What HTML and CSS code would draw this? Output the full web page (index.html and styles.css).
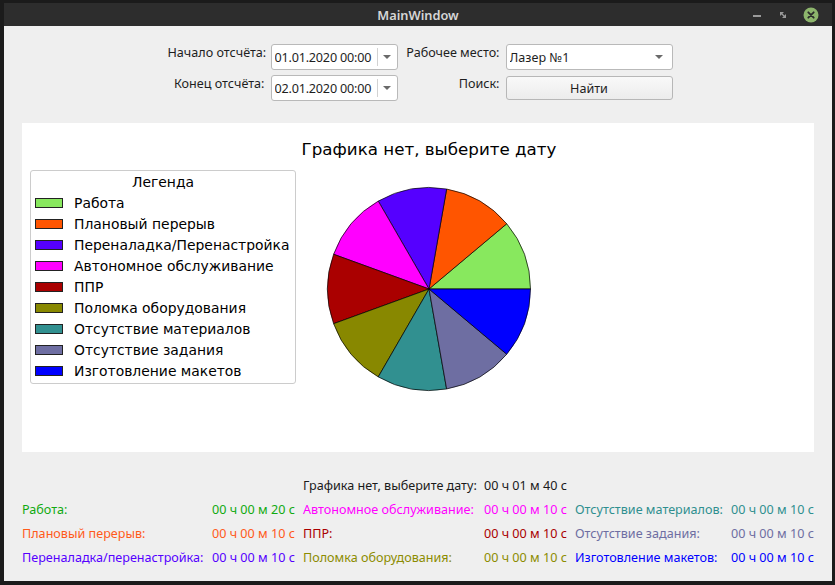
FILE: index.html
```html
<!DOCTYPE html>
<html lang="ru">
<head>
<meta charset="utf-8">
<title>MainWindow</title>
<link rel="stylesheet" href="styles.css">
</head>
<body>
<div class="window">
  <div class="titlebar">
    <span class="title">MainWindow</span>
    <div class="wm-buttons">
      <svg class="wm-min" width="12" height="12" viewBox="0 0 12 12"><rect x="2" y="6" width="8" height="2" fill="#9a9a9a"/></svg>
      <svg class="wm-max" width="12" height="12" viewBox="0 0 12 12"><path d="M3 3 L7 3 L3 7 Z M9 9 L5 9 L9 5 Z" fill="#9a9a9a"/><path d="M4 4 L8 8" stroke="#9a9a9a" stroke-width="1.2"/></svg>
      <svg class="wm-close" width="16" height="16" viewBox="0 0 16 16"><circle cx="8" cy="8" r="7.5" fill="#8db56c"/><path d="M5.3 5.3 L10.7 10.7 M10.7 5.3 L5.3 10.7" stroke="#2a2a2a" stroke-width="1.8" stroke-linecap="round"/></svg>
    </div>
  </div>
  <div class="content">
    <div class="controls">
      <label class="ctl-label">Начало отсчёта:</label>
      <div class="combo date">
        <span class="combo-text">01.01.2020 00:00</span>
        <span class="combo-sep"></span>
        <span class="combo-arrow"></span>
      </div>
      <label class="ctl-label">Рабочее место:</label>
      <div class="combo place">
        <span class="combo-text">Лазер №1</span>
        <span class="combo-arrow"></span>
      </div>
      <label class="ctl-label">Конец отсчёта:</label>
      <div class="combo date">
        <span class="combo-text">02.01.2020 00:00</span>
        <span class="combo-sep"></span>
        <span class="combo-arrow"></span>
      </div>
      <label class="ctl-label">Поиск:</label>
      <button class="btn">Найти</button>
    </div>

    <div class="chart">
      <div class="legend">
        <div class="legend-title">Легенда</div>
        <div class="legend-row"><span class="swatch c-work"></span>Работа</div>
        <div class="legend-row"><span class="swatch c-break"></span>Плановый перерыв</div>
        <div class="legend-row"><span class="swatch c-setup"></span>Переналадка/Перенастройка</div>
        <div class="legend-row"><span class="swatch c-auto"></span>Автономное обслуживание</div>
        <div class="legend-row"><span class="swatch c-ppr"></span>ППР</div>
        <div class="legend-row"><span class="swatch c-broken"></span>Поломка оборудования</div>
        <div class="legend-row"><span class="swatch c-mat"></span>Отсутствие материалов</div>
        <div class="legend-row"><span class="swatch c-task"></span>Отсутствие задания</div>
        <div class="legend-row"><span class="swatch c-mock"></span>Изготовление макетов</div>
      </div>
      <div class="plot">
        <div class="plot-title">Графика нет, выберите дату</div>
        <svg class="pie" width="206" height="206" viewBox="-103 -103 206 206">
          <g stroke="#000" stroke-width="0.7" stroke-linejoin="round">
            <path d="M0 0 L101.5 0 A101.5 101.5 0 0 0 77.75 -65.24 Z" fill="#88e85e"/>
            <path d="M0 0 L77.75 -65.24 A101.5 101.5 0 0 0 17.63 -99.96 Z" fill="#ff5500"/>
            <path d="M0 0 L17.63 -99.96 A101.5 101.5 0 0 0 -50.75 -87.90 Z" fill="#5500ff"/>
            <path d="M0 0 L-50.75 -87.90 A101.5 101.5 0 0 0 -95.38 -34.71 Z" fill="#ff00ff"/>
            <path d="M0 0 L-95.38 -34.71 A101.5 101.5 0 0 0 -95.38 34.71 Z" fill="#aa0000"/>
            <path d="M0 0 L-95.38 34.71 A101.5 101.5 0 0 0 -50.75 87.90 Z" fill="#888800"/>
            <path d="M0 0 L-50.75 87.90 A101.5 101.5 0 0 0 17.63 99.96 Z" fill="#319090"/>
            <path d="M0 0 L17.63 99.96 A101.5 101.5 0 0 0 77.75 65.24 Z" fill="#6e6ea2"/>
            <path d="M0 0 L77.75 65.24 A101.5 101.5 0 0 0 101.5 0 Z" fill="#0000ff"/>
          </g>
        </svg>
      </div>
    </div>

    <div class="stats">
      <span></span><span></span>
      <span class="t-total">Графика нет, выберите дату:</span>
      <span class="t-total">00 ч 01 м 40 с</span>
      <span></span><span></span>

      <span class="t-work">Работа:</span>
      <span class="t-work">00 ч 00 м 20 с</span>
      <span class="t-auto">Автономное обслуживание:</span>
      <span class="t-auto">00 ч 00 м 10 с</span>
      <span class="t-mat">Отсутствие материалов:</span>
      <span class="t-mat">00 ч 00 м 10 с</span>

      <span class="t-break">Плановый перерыв:</span>
      <span class="t-break">00 ч 00 м 10 с</span>
      <span class="t-ppr">ППР:</span>
      <span class="t-ppr">00 ч 00 м 10 с</span>
      <span class="t-task">Отсутствие задания:</span>
      <span class="t-task">00 ч 00 м 10 с</span>

      <span class="t-setup">Переналадка/перенастройка:</span>
      <span class="t-setup">00 ч 00 м 10 с</span>
      <span class="t-broken">Поломка оборудования:</span>
      <span class="t-broken">00 ч 00 м 10 с</span>
      <span class="t-mock">Изготовление макетов:</span>
      <span class="t-mock">00 ч 00 м 10 с</span>
    </div>
  </div>
</div>
</body>
</html>
```

FILE: styles.css
```css
* { box-sizing: border-box; }

html, body {
  margin: 0;
  padding: 0;
  width: 835px;
  height: 585px;
  overflow: hidden;
  background: #1b1b1b;
}

body {
  padding: 3px 3px 0 4px;
  font-family: "Noto Sans", "Open Sans", sans-serif;
  font-size: 12.6px;
  color: #1e1e1e;
}

.window {
  width: 828px;
  height: 578px;
  display: flex;
  flex-direction: column;
  background: #efefef;
}

.titlebar {
  height: 23px;
  flex: none;
  background: #2d2d2d;
  display: flex;
  align-items: center;
  justify-content: center;
  position: relative;
}

.title {
  color: #d6d6d6;
  font-family: "Noto Sans", sans-serif;
  font-size: 12.8px;
  font-weight: 600;
}

.wm-buttons {
  position: absolute;
  right: 13px;
  top: 4px;
  display: flex;
  align-items: center;
  gap: 14px;
}

.content {
  flex: 1;
  display: flex;
  flex-direction: column;
  padding: 18px 18px 0 18px;
}

.controls {
  display: grid;
  grid-template-columns: 97px 127px 96px 167px;
  grid-template-rows: 26px 26px;
  column-gap: 6px;
  row-gap: 5px;
  justify-content: center;
  align-items: center;
  margin-left: 4px;
}

.ctl-label {
  align-self: start;
  text-align: right;
  white-space: nowrap;
  line-height: 17px;
}

.combo {
  height: 26px;
  background: #fff;
  border: 1px solid #b9b9b9;
  border-radius: 3px;
  display: flex;
  align-items: center;
  padding-left: 3px;
}

.combo-text {
  flex: 1;
  white-space: nowrap;
  overflow: hidden;
  padding-top: 1px;
}

.date .combo-text { letter-spacing: -0.2px; }

.combo-sep {
  width: 1px;
  align-self: stretch;
  margin: 3px 0;
  background: #d2d2d2;
}

.combo-arrow {
  width: 19px;
  height: 100%;
  display: flex;
  align-items: center;
  justify-content: center;
}

.combo-arrow::after {
  content: "";
  border-left: 4px solid transparent;
  border-right: 4px solid transparent;
  border-top: 4px solid #6a6a6a;
}

.place .combo-arrow { width: 26px; }

.btn {
  height: 24px;
  font: inherit;
  color: inherit;
  background: linear-gradient(#f9f9f9, #ececec);
  border: 1px solid #b7b7b7;
  border-radius: 3px;
  padding: 0;
}

.chart {
  margin-top: 22px;
  height: 329px;
  background: #fff;
  display: flex;
  align-items: flex-start;
  font-family: "DejaVu Sans", sans-serif;
  color: #000;
}

.legend {
  width: 266px;
  margin: 47px 0 0 8px;
  border: 1px solid #cccccc;
  border-radius: 3px;
  padding: 2px 0 1px 0;
  font-size: 13.9px;
}

.legend-title {
  text-align: center;
  line-height: 19px;
  height: 19px;
}

.legend-row {
  display: flex;
  align-items: center;
  height: 21.1px;
  white-space: nowrap;
}

.swatch {
  width: 28px;
  height: 10px;
  margin: 0 11px 0 4px;
  border: 1px solid #222;
  flex: none;
}

.plot {
  width: 266px;
  display: flex;
  flex-direction: column;
  align-items: center;
}

.plot-title {
  margin-top: 16px;
  font-size: 16.7px;
  line-height: 20px;
  white-space: nowrap;
}

.pie {
  display: block;
  margin-top: 27px;
}

.c-work { background: #88e85e; }
.c-break { background: #ff5500; }
.c-setup { background: #5500ff; }
.c-auto { background: #ff00ff; }
.c-ppr { background: #aa0000; }
.c-broken { background: #888800; }
.c-mat { background: #319090; }
.c-task { background: #6e6ea2; }
.c-mock { background: #0000ff; }

.stats {
  margin-top: 21px;
  display: grid;
  grid-template-columns: 190px 91px 181px 91px 156px 81px;
  grid-auto-rows: 24px;
  align-items: center;
  white-space: nowrap;
}

.t-total { color: #1a1a1a; }
.t-work { color: #11aa11; }
.t-break { color: #ff5a1a; }
.t-setup { color: #5500ff; }
.t-auto { color: #ff00ff; }
.t-ppr { color: #aa0000; }
.t-broken { color: #8c8c00; }
.t-mat { color: #2f8f8f; }
.t-task { color: #6e6ea2; }
.t-mock { color: #0000ff; }
```
